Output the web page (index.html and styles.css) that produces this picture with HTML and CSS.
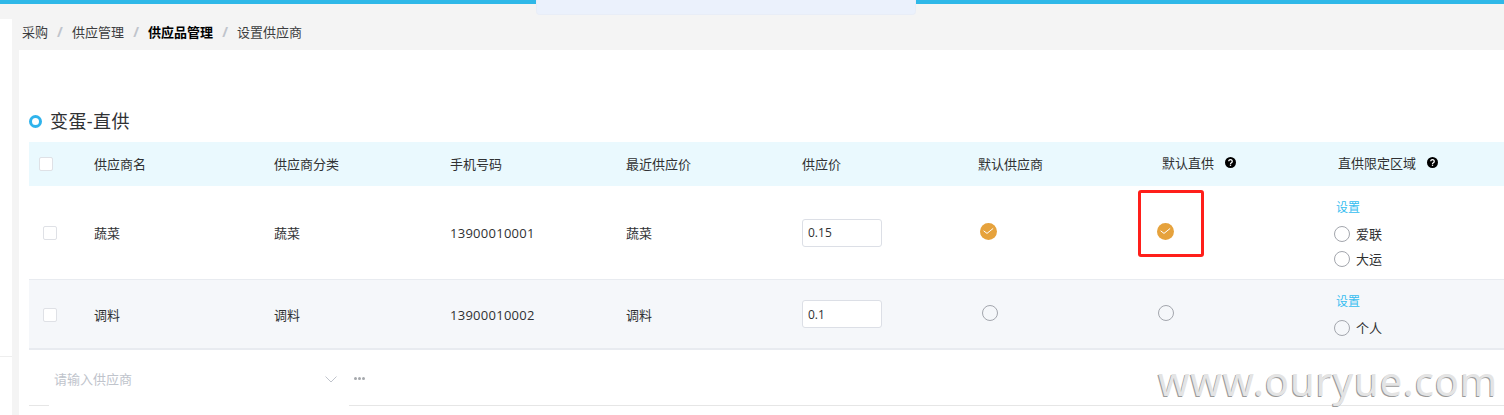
FILE: index.html
```html
<!DOCTYPE html>
<html lang="zh-CN">
<head>
<meta charset="utf-8">
<title>设置供应商</title>
<link rel="stylesheet" href="styles.css">
</head>
<body>
<div class="topbar"></div>
<div class="tab-strip"></div>
<div class="shell">
  <aside class="sidebar"><div class="sidebar-top"></div></aside>
  <main class="main">
    <nav class="crumbs">
      <span>采购</span><i class="sep">/</i>
      <span>供应管理</span><i class="sep">/</i>
      <b>供应品管理</b><i class="sep">/</i>
      <span>设置供应商</span>
    </nav>
    <section class="panel">
      <h2 class="title"><span class="dot"></span>变蛋-直供</h2>
      <div class="table">
        <div class="row head">
          <div class="cell"><span class="box box-head"></span></div>
          <div class="cell">供应商名</div>
          <div class="cell">供应商分类</div>
          <div class="cell">手机号码</div>
          <div class="cell">最近供应价</div>
          <div class="cell">供应价</div>
          <div class="cell">默认供应商</div>
          <div class="cell cell-help">默认直供<svg class="help" viewBox="0 0 12 12"><circle cx="6" cy="6" r="6" fill="#000"/><path d="M4.1 4.7a1.9 1.8 0 1 1 2.9 1.5c-.7.4-1 .7-1 1.3" fill="none" stroke="#fff" stroke-width="1.4"/><rect x="5.3" y="8.3" width="1.4" height="1.4" fill="#fff"/></svg></div>
          <div class="cell cell-help">直供限定区域<svg class="help" viewBox="0 0 12 12"><circle cx="6" cy="6" r="6" fill="#000"/><path d="M4.1 4.7a1.9 1.8 0 1 1 2.9 1.5c-.7.4-1 .7-1 1.3" fill="none" stroke="#fff" stroke-width="1.4"/><rect x="5.3" y="8.3" width="1.4" height="1.4" fill="#fff"/></svg></div>
        </div>
        <div class="row first">
          <div class="cell"><span class="box"></span></div>
          <div class="cell">蔬菜</div>
          <div class="cell">蔬菜</div>
          <div class="cell phone">13900010001</div>
          <div class="cell">蔬菜</div>
          <div class="cell"><input class="price" value="0.15"></div>
          <div class="cell raised"><svg class="check check-a" viewBox="0 0 17 17"><circle cx="8.5" cy="8.5" r="8.5" fill="#e6a23c"/><path d="M3.6 7.8l3.4 2.6 6.2-5" fill="none" stroke="#fff" stroke-width="1"/></svg></div>
          <div class="cell raised"><svg class="check check-b" viewBox="0 0 17 17"><circle cx="8.5" cy="8.5" r="8.5" fill="#e6a23c"/><path d="M3.6 7.8l3.4 2.6 6.2-5" fill="none" stroke="#fff" stroke-width="1"/></svg></div>
          <div class="cell area">
            <a class="link">设置</a>
            <label class="opt"><span class="radio"></span>爱联</label>
            <label class="opt"><span class="radio"></span>大运</label>
          </div>
        </div>
        <div class="row second">
          <div class="cell"><span class="box"></span></div>
          <div class="cell">调料</div>
          <div class="cell">调料</div>
          <div class="cell phone">13900010002</div>
          <div class="cell">调料</div>
          <div class="cell"><input class="price" value="0.1"></div>
          <div class="cell raised"><span class="radio radio-cell"></span></div>
          <div class="cell raised"><span class="radio radio-cell"></span></div>
          <div class="cell area">
            <a class="link">设置</a>
            <label class="opt"><span class="radio"></span>个人</label>
          </div>
        </div>
      </div>
      <div class="footer">
        <div class="picker">
          <span class="placeholder">请输入供应商</span>
          <svg class="chevron" viewBox="0 0 12 7"><path d="M.5.5L6 6 11.5.5" fill="none" stroke="#c0c4cc" stroke-width="1"/></svg>
        </div>
        <div class="more"><span></span><span></span><span></span></div>
      </div>
    </section>
  </main>
</div>
<div class="annotation"></div>
<div class="watermark">www.ouryue.com</div>
</body>
</html>
```
FILE: styles.css
```css
* { box-sizing: border-box; }
html, body { margin: 0; height: 415px; overflow: hidden; }
body {
  position: relative;
  background: #f4f4f4;
  color: #303133;
  font: 13px/20px "Open Sans", "Noto Sans CJK SC", sans-serif;
}
.topbar { height: 4px; background: #2fb8e8; }
.tab-strip {
  position: absolute;
  left: 536px; top: 0;
  width: 380px; height: 15px;
  background: #ebf1fc;
  border: 1px solid #e8edf7;
  border-top: 0;
  border-radius: 0 0 4px 4px;
}
.shell { display: flex; gap: 7px; padding-top: 15px; height: 411px; }
.sidebar { width: 12px; background: #fff; flex: none; }
.sidebar-top { height: 338px; border-bottom: 1px solid #eee; }
.main { flex: 1; min-width: 0; display: flex; flex-direction: column; }
.crumbs { height: 31px; padding: 0 0 5px 3px; display: flex; align-items: center; color: #3c3d40; }
.crumbs b { color: #000; font-weight: 700; }
.sep { width: 24px; text-align: center; color: #c0c4cc; font-size: 14px; font-style: normal; font-weight: 700; }
.panel { flex: 1; background: #fff; padding: 58px 0 0 10px; }
.title { display: flex; align-items: center; height: 26px; margin: 0 0 8px; font-size: 18px; font-weight: 400; letter-spacing: .4px; color: #303133; }
.dot { width: 13px; height: 13px; margin-right: 8px; border: 3.5px solid #2fb3ec; border-radius: 50%; }
.row { display: grid; grid-template-columns: 65px 180px repeat(6, 176px) 1fr; }
.cell { display: flex; align-items: center; min-width: 0; }
.head { height: 44px; background: #eaf9fe; }
.first { height: 94px; border-bottom: 1px solid #e8ebf0; }
.second { height: 70px; padding-top: 1px; background: #f5f7fa; border-bottom: 2px solid #e8ebf0; }
.second .price { margin-top: -1px; }
.second .area { padding-top: 10px; }
.box { width: 14px; height: 14px; margin-left: 14px; background: #fff; border: 1px solid #dfe1e6; border-radius: 2px; }
.box-head { margin-left: 10px; }
.cell-help { padding: 0 0 3px 8px; }
.help { width: 11px; height: 11px; margin-left: 11px; }
.phone { letter-spacing: .27px; }
.price { width: 80px; height: 28px; padding: 0 5px; border: 1px solid #dcdfe6; border-radius: 3px; background: #fff; color: #303133; font: 12px "Open Sans", sans-serif; }
.raised { padding-bottom: 3px; }
.first .raised { padding-bottom: 2px; }
.check { width: 17px; height: 17px; }
.check-a { margin-left: 2px; }
.check-b { margin-left: 3px; }
.radio { display: block; flex: none; width: 16px; height: 16px; border: 1px solid #a3a6ad; border-radius: 50%; }
.radio-cell { margin-left: 4px; }
.area { flex-direction: column; align-items: flex-start; padding: 11px 0 0 4px; }
.link { display: block; height: 22px; margin: 0 0 2px 2px; line-height: 22px; font-size: 12px; color: #35bdf0; }
.opt { display: flex; align-items: center; gap: 6px; height: 25px; font-size: 13px; }
.footer { display: flex; align-items: center; height: 56px; border-bottom: 1px solid #e6e6e6; }
.picker { position: relative; top: 1px; display: flex; align-items: center; justify-content: space-between; width: 300px; height: 56px; margin-left: 20px; padding: 0 12px 0 5px; background: #fff; }
.placeholder { color: #c0c4cc; font-size: 13px; }
.chevron { width: 12px; height: 7px; margin-top: 2px; }
.more { display: flex; gap: 1px; margin-left: 5px; margin-top: 2px; }
.more span { width: 3px; height: 3px; border-radius: 50%; background: #a6a9ad; }
.annotation { position: absolute; left: 1138px; top: 190px; width: 66px; height: 67px; border: 3px solid #ff1f1a; border-radius: 3px; }
.watermark {
  position: absolute; left: 1158px; top: 353px;
  font: 40px/56px "Noto Sans", sans-serif;
  letter-spacing: .85px;
  color: #e4e4e4;
  text-shadow: -1px 1px 0 #9a9a9a;
  white-space: nowrap;
}
```
